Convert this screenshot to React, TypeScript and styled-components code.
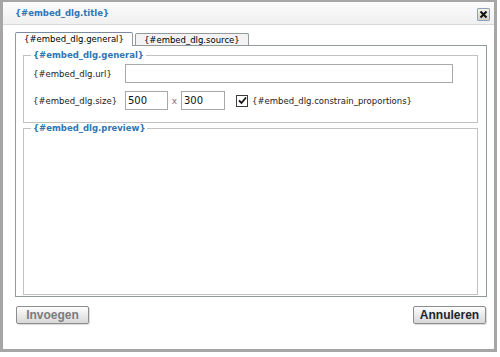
import React, { useState } from "react";
import styled, { createGlobalStyle } from "styled-components";

const GlobalStyle = createGlobalStyle`
  html, body {
    margin: 0;
    padding: 0;
    background: #ffffff;
  }
  body {
    font-family: "DejaVu Sans", Verdana, sans-serif;
  }
`;

function App() {
  const [activeTab, setActiveTab] = useState<string>("general");
  const [constrain, setConstrain] = useState<boolean>(true);

  return (
    <>
      <GlobalStyle />
      <Window>
        <TitleBar>
          <Title>{"{#embed_dlg.title}"}</Title>
          <CloseButton aria-label="close">
            <svg width="9" height="9" viewBox="0 0 9 9">
              <path d="M1.5 1.5 L7.5 7.5 M7.5 1.5 L1.5 7.5" stroke="#111" strokeWidth="2" />
            </svg>
          </CloseButton>
        </TitleBar>
        <Body>
          <TabRow>
            <Tab active={activeTab === "general"} onClick={() => setActiveTab("general")}>
              {"{#embed_dlg.general}"}
            </Tab>
            <Tab active={activeTab === "source"} onClick={() => setActiveTab("source")}>
              {"{#embed_dlg.source}"}
            </Tab>
          </TabRow>
          <Panel>
            <Fieldset>
              <Legend>{"{#embed_dlg.general}"}</Legend>
              <FormRow>
                <Label>{"{#embed_dlg.url}"}</Label>
                <TextInput width={328} />
              </FormRow>
              <FormRow>
                <Label>{"{#embed_dlg.size}"}</Label>
                <TextInput width={43} defaultValue="500" />
                <Times>x</Times>
                <TextInput width={44} defaultValue="300" />
                <CheckLabel onClick={() => setConstrain(!constrain)}>
                  <CheckBox>
                    {constrain && (
                      <svg width="9" height="9" viewBox="0 0 9 9">
                        <path d="M1 4.5 L3.5 7 L8 1.5" fill="none" stroke="#111" strokeWidth="1.8" />
                      </svg>
                    )}
                  </CheckBox>
                  {"{#embed_dlg.constrain_proportions}"}
                </CheckLabel>
              </FormRow>
            </Fieldset>
            <PreviewFieldset>
              <Legend>{"{#embed_dlg.preview}"}</Legend>
            </PreviewFieldset>
          </Panel>
          <ButtonRow>
            <DialogButton disabled>Invoegen</DialogButton>
            <DialogButton>Annuleren</DialogButton>
          </ButtonRow>
        </Body>
      </Window>
    </>
  );
}

export default App;

const Window = styled.div`
  box-sizing: border-box;
  width: 497px;
  height: 352px;
  border: 3px solid #a6a6a6;
  border-top-width: 2px;
  background: #ffffff;
  display: flex;
  flex-direction: column;
`;

const TitleBar = styled.div`
  height: 23px;
  box-sizing: border-box;
  border-bottom: 1px solid #d8d8d8;
  background: linear-gradient(#fcfcfc, #f0f0f0);
  display: flex;
  align-items: center;
  justify-content: space-between;
  padding: 0 4px 0 12px;
`;

const Title = styled.span`
  font-size: 8.5px;
  font-weight: bold;
  color: #2f75b5;
`;

const CloseButton = styled.button`
  box-sizing: border-box;
  width: 13px;
  height: 13px;
  padding: 0;
  margin-top: 2px;
  border: 1px solid #8fa3b8;
  border-radius: 1px;
  background: linear-gradient(#f4f1ea, #d6d0c4);
  display: flex;
  align-items: center;
  justify-content: center;
`;

const Body = styled.div`
  flex: 1;
  display: flex;
  flex-direction: column;
  padding: 6px 8px 0 12px;
`;

const TabRow = styled.div`
  display: flex;
  align-items: flex-end;
  gap: 2px;
  height: 14px;
`;

const Tab = styled.div<{ active: boolean }>`
  box-sizing: border-box;
  height: ${(p) => (p.active ? "14px" : "12px")};
  padding: 0 8px;
  border: 1px solid #919b9c;
  border-bottom: none;
  border-top-color: ${(p) => (p.active ? "#7a8aa0" : "#919b9c")};
  border-radius: 2px 2px 0 0;
  background: ${(p) => (p.active ? "#ffffff" : "#f3f3f3")};
  font-size: 8.5px;
  line-height: 12px;
  color: #000;
  cursor: pointer;
  position: relative;
  top: ${(p) => (p.active ? "1px" : "0")};
`;

const Panel = styled.div`
  box-sizing: border-box;
  width: 472px;
  height: 252px;
  border: 1px solid #919b9c;
  padding: 4px 8px 1px 7px;
  display: flex;
  flex-direction: column;
`;

const Fieldset = styled.fieldset`
  margin: 0;
  padding: 4px 0 0 9px;
  border: 1px solid #c2c2c2;
  height: 73px;
  box-sizing: border-box;
  display: flex;
  flex-direction: column;
  gap: 8px;
`;

const PreviewFieldset = styled(Fieldset)`
  flex: 1;
`;

const Legend = styled.legend`
  padding: 0 2px;
  margin-left: -2px;
  font-size: 8.5px;
  font-weight: bold;
  color: #2f75b5;
`;

const FormRow = styled.div`
  display: flex;
  align-items: center;
  height: 19px;
`;

const Label = styled.span`
  width: 92px;
  font-size: 8.5px;
  color: #222;
`;

const TextInput = styled.input.attrs({ type: "text" })<{ width: number }>`
  box-sizing: border-box;
  width: ${(p) => p.width}px;
  height: 19px;
  border: 1px solid #a8a8a8;
  padding: 0 2px;
  font-family: "DejaVu Sans", Verdana, sans-serif;
  font-size: 10px;
  color: #111;
  background: #fff;
  outline: none;
`;

const Times = styled.span`
  width: 13px;
  text-align: center;
  font-size: 9px;
  color: #8a6a80;
`;

const CheckLabel = styled.label`
  display: flex;
  align-items: center;
  margin-left: 11px;
  font-size: 8.5px;
  color: #222;
  cursor: pointer;
`;

const CheckBox = styled.span`
  box-sizing: border-box;
  width: 12px;
  height: 12px;
  margin-right: 4px;
  border: 1px solid #3c3c3c;
  background: #fff;
  display: flex;
  align-items: center;
  justify-content: center;
`;

const ButtonRow = styled.div`
  display: flex;
  justify-content: space-between;
  padding: 9px 0 0 1px;
  width: 470px;
`;

const DialogButton = styled.button`
  box-sizing: border-box;
  width: 73px;
  height: 18px;
  padding: 0;
  border: 1px solid #8d8d8d;
  border-radius: 2px;
  background: linear-gradient(#fdfdfd, #d8d8d8);
  box-shadow: 1px 1px 1px rgba(0, 0, 0, 0.15);
  font-family: "Liberation Sans", Arial, sans-serif;
  font-size: 12px;
  font-weight: bold;
  color: #1c2430;
  &:disabled {
    color: #7c7c7c;
  }
`;
